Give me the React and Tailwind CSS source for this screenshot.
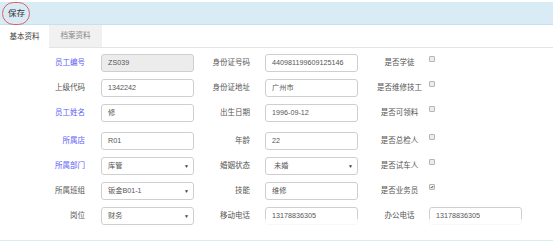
import React from "react";

const rows = [
  {
    h: "h-[25px]",
    a: { label: "员工编号", blue: true, value: "ZS039", disabled: true },
    b: { label: "身份证号码", value: "440981199609125146" },
    c: { label: "是否学徒", checked: false },
  },
  {
    h: "h-[25px]",
    a: { label: "上级代码", value: "1342242" },
    b: { label: "身份证地址", value: "广州市" },
    c: { label: "是否维修技工", checked: false },
  },
  {
    h: "h-[28px]",
    a: { label: "员工姓名", blue: true, value: "修" },
    b: { label: "出生日期", value: "1996-09-12" },
    c: { label: "是否可领料", checked: false },
  },
  {
    h: "h-[25px]",
    a: { label: "所属店", blue: true, value: "R01" },
    b: { label: "年龄", value: "22" },
    c: { label: "是否总检人", checked: false },
  },
  {
    h: "h-[25px]",
    a: { label: "所属部门", blue: true, value: "库管", select: true },
    b: { label: "婚姻状态", value: "未婚", select: true, indent: true },
    c: { label: "是否试车人", checked: false },
  },
  {
    h: "h-[25px]",
    a: { label: "所属班组", value: "钣金B01-1", select: true },
    b: { label: "技能", value: "维修" },
    c: { label: "是否业务员", checked: true },
  },
  {
    h: "h-[25px]",
    a: { label: "岗位", value: "财务", select: true },
    b: { label: "移动电话", value: "13178836305" },
    c: { label: "办公电话", value: "13178836305" },
  },
];

const font = { fontFamily: '"Liberation Sans", "Noto Sans CJK SC", sans-serif' };

function Label({ text, blue, width }) {
  return (
    <div className={`${width} shrink-0 text-right text-[7.5px] leading-none ${blue ? "text-[#5b5bf5]" : "text-[#555]"}`}>
      {text}
    </div>
  );
}

function Field({ value, disabled, select, indent }) {
  return (
    <div
      className={`relative flex h-[18px] w-[93px] shrink-0 items-center rounded-[3px] border border-[#cfcfcf] text-[7.2px] text-[#555] ${
        disabled ? "bg-[#ececec]" : "bg-white"
      } ${indent ? "pl-[8px]" : "pl-[6px]"}`}
    >
      {value}
      {select && <span className="absolute right-[4px] top-[5px] text-[5px] text-[#444]">▼</span>}
    </div>
  );
}

function Check({ checked }) {
  return (
    <div className="flex h-[6px] w-[6px] items-center justify-center self-start rounded-[1px] border border-[#b5b5b5] bg-[#ededed] mt-[2px]">
      {checked && (
        <svg viewBox="0 0 10 10" className="h-[6px] w-[6px]">
          <path d="M2 5.2 L4.2 7.4 L8.2 2.6" fill="none" stroke="#222" strokeWidth="1.8" />
        </svg>
      )}
    </div>
  );
}

export default function App() {
  return (
    <div className="relative h-[247px] w-[553px] overflow-hidden bg-white" style={font}>
      <div className="h-[2px]" />
      <div className="relative flex h-[23px] items-center border-b border-[#c7e0ee] bg-[#d9ebf5] pl-[8px]">
        <span className="text-[8.5px] text-[#333]">保存</span>
        <div className="absolute left-[2px] top-[0px] h-[23px] w-[28px] rounded-full border border-[#d9636a]" />
      </div>
      <div className="flex h-[23px] border-b border-[#e4e4e4]">
        <div className="relative -mb-px flex w-[49px] items-center justify-center bg-white text-[7.5px] text-[#444]">
          基本资料
        </div>
        <div className="flex w-[53px] items-center justify-center bg-[#f1f1f1] text-[7.5px] text-[#888]">
          档案资料
        </div>
      </div>
      <div className="pt-[6px]">
        {rows.map((r, i) => (
          <div key={i} className={`flex items-start ${r.h}`}>
            <div className="flex h-[18px] items-center">
              <Label text={r.a.label} blue={r.a.blue} width="w-[85px]" />
              <div className="w-[16px]" />
              <Field {...r.a} />
              <Label text={r.b.label} width="w-[56px]" />
              <div className="w-[15px]" />
              <Field {...r.b} />
              <div className="w-[12px]" />
              <div className="w-[59px] shrink-0 text-center text-[7.5px] leading-none text-[#555]">{r.c.label}</div>
              {r.c.value ? <Field value={r.c.value} /> : <Check checked={r.c.checked} />}
            </div>
          </div>
        ))}
      </div>
      <div className="absolute left-[252px] top-[219px] h-[8px] w-[301px] bg-white/85" />
      <div className="absolute left-0 top-[240px] h-px w-full bg-[#d6eef0]" />
    </div>
  );
}
